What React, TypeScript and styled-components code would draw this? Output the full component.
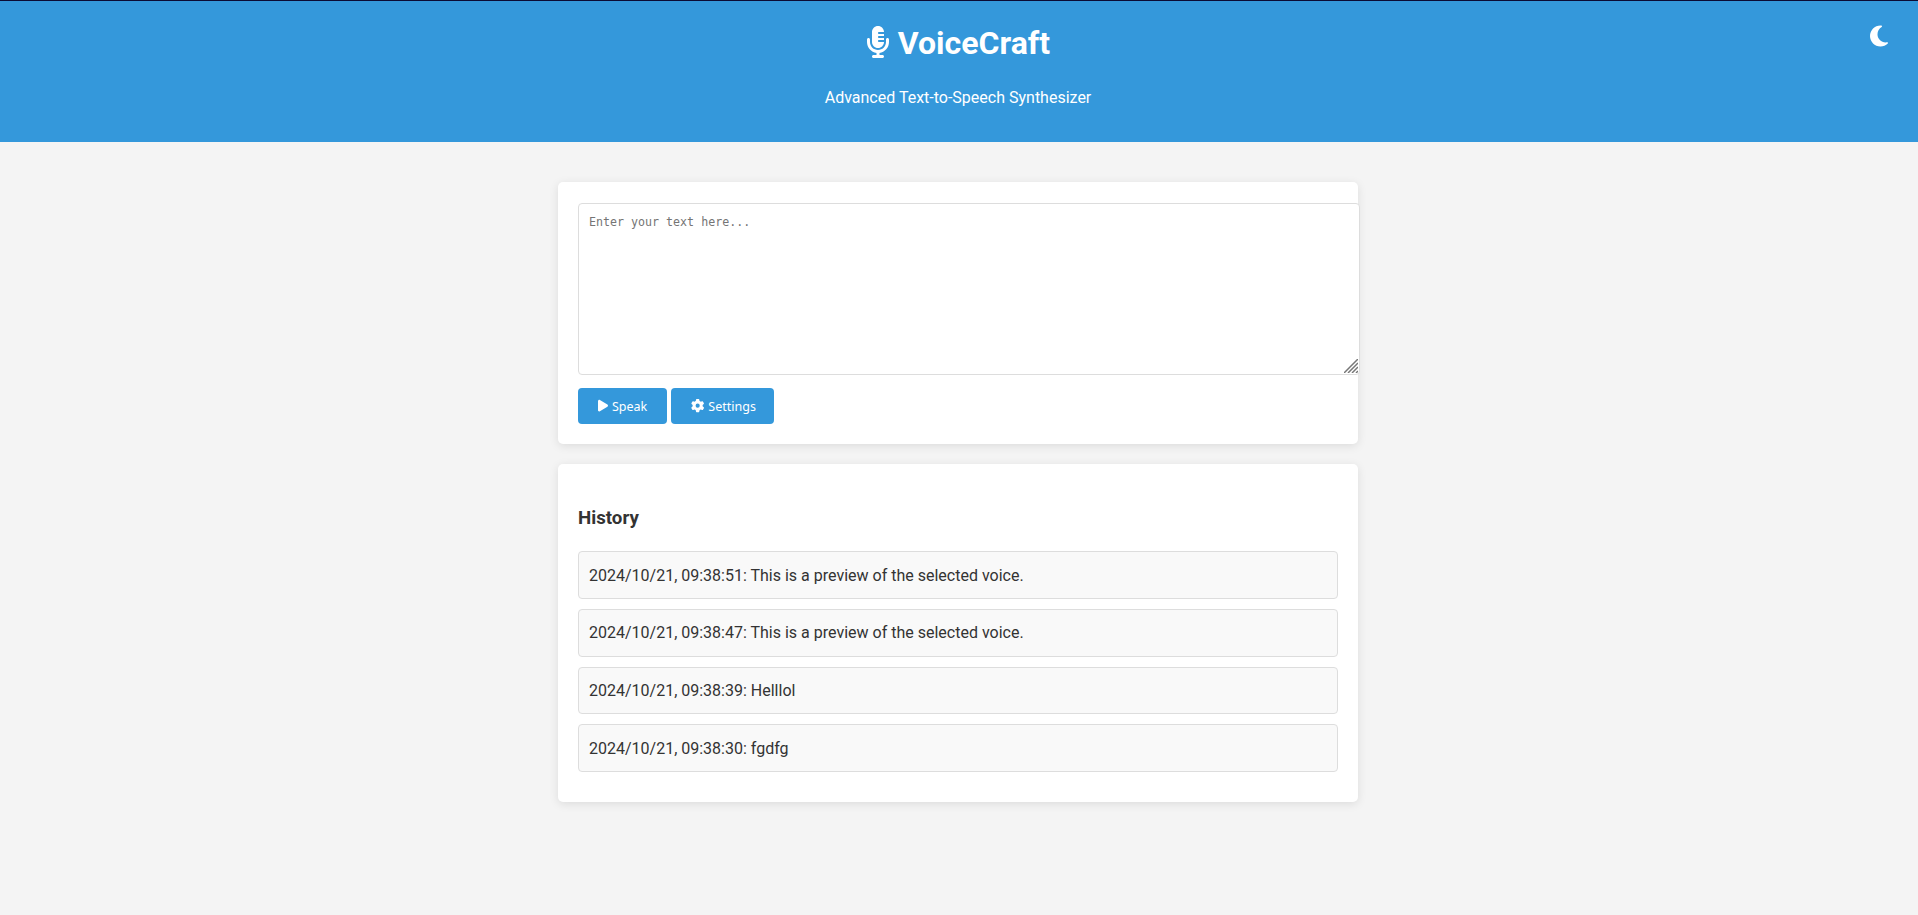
import React from 'react';
import styled, { createGlobalStyle } from 'styled-components';
import { FaMicrophoneLines, FaMoon, FaPlay, FaGear } from 'react-icons/fa6';

const GlobalStyle = createGlobalStyle`
  body {
    margin: 0;
    background: #f4f4f4;
    color: #333;
    font-family: Roboto, sans-serif;
    font-size: 16px;
    line-height: 1.6;
  }
`;

const Page = styled.div`
  border-top: 1px solid #0b0b35;
`;

const Header = styled.header`
  position: relative;
  box-sizing: border-box;
  height: 141px;
  padding: 17px 18px 16px 16px;
  background: #3498db;
  color: #fff;
  text-align: center;
`;

const Title = styled.h1`
  margin: 0;
  font-size: 32px;
  line-height: 51px;
  font-weight: 700;

  svg {
    width: 24px;
    vertical-align: -4px;
  }
`;

const Tagline = styled.p`
  margin: 16px 0 0;
  line-height: 26px;
`;

const ThemeToggle = styled.button`
  position: absolute;
  top: 23px;
  right: 30px;
  display: flex;
  padding: 0;
  border: 0;
  background: none;
  color: #fff;
  font-size: 24px;

  svg {
    width: 18px;
  }
`;

const Main = styled.main`
  width: 800px;
  margin: 40px auto 0;
  padding-right: 2px;
`;

const Card = styled.section`
  margin-bottom: 20px;
  padding: 20px;
  border-radius: 5px;
  background: #fff;
  box-shadow: 0 2px 10px rgba(0, 0, 0, 0.1);
`;

const InputWrap = styled.div`
  position: relative;
  width: 782px;
  margin-top: 1px;
`;

const TextInput = styled.textarea`
  display: block;
  box-sizing: border-box;
  width: 100%;
  height: 172px;
  padding: 11px 10px 10px;
  border: 1px solid #ddd;
  border-radius: 4px;
  resize: none;
  font-family: 'DejaVu Sans Mono', monospace;
  font-size: 11.65px;
`;

const ResizeGrip = styled.svg`
  position: absolute;
  right: 2px;
  bottom: 2px;
  width: 14px;
  height: 14px;
`;

const Actions = styled.div`
  display: flex;
  gap: 4px;
  margin-top: 13px;
`;

const ActionButton = styled.button<{ $width: number; $iconWidth: number }>`
  display: flex;
  align-items: center;
  gap: 4px;
  box-sizing: border-box;
  width: ${({ $width }) => $width}px;
  height: 36px;
  padding: 1px 0 0 20px;
  border: 0;
  border-radius: 4px;
  background: #3498db;
  color: #fff;
  font-family: 'Noto Sans', sans-serif;
  font-size: 12.5px;
  white-space: nowrap;

  svg {
    flex: none;
    width: ${({ $iconWidth }) => $iconWidth}px;
    height: 13.33px;
    margin-bottom: 1px;
  }
`;

const SectionTitle = styled.h3`
  margin: 19.52px 0 17.92px;
  font-size: 18.72px;
`;

const HistoryItem = styled.div`
  margin-bottom: 10px;
  padding: 10.5px 10px 9.5px;
  border: 1px solid #ddd;
  border-radius: 4px;
  background: #f9f9f9;
`;

const history = [
  '2024/10/21, 09:38:51: This is a preview of the selected voice.',
  '2024/10/21, 09:38:47: This is a preview of the selected voice.',
  '2024/10/21, 09:38:39: Helllol',
  '2024/10/21, 09:38:30: fgdfg',
];

export default function App() {
  return (
    <Page>
      <GlobalStyle />
      <Header>
        <Title><FaMicrophoneLines /> VoiceCraft</Title>
        <Tagline>Advanced Text-to-Speech Synthesizer</Tagline>
        <ThemeToggle aria-label="Toggle theme"><FaMoon /></ThemeToggle>
      </Header>
      <Main>
        <Card>
          <InputWrap>
            <TextInput placeholder="Enter your text here..." />
            <ResizeGrip viewBox="0 0 14 14" stroke="#777" strokeWidth="1.5">
              <path d="M0 14 14 0M4 14 14 4M8 14 14 8M12 14 14 12" />
            </ResizeGrip>
          </InputWrap>
          <Actions>
            <ActionButton $width={89} $iconWidth={10}><FaPlay />Speak</ActionButton>
            <ActionButton $width={103} $iconWidth={13.33}><FaGear />Settings</ActionButton>
          </Actions>
        </Card>
        <Card>
          <SectionTitle>History</SectionTitle>
          {history.map((entry) => <HistoryItem key={entry}>{entry}</HistoryItem>)}
        </Card>
      </Main>
    </Page>
  );
}
